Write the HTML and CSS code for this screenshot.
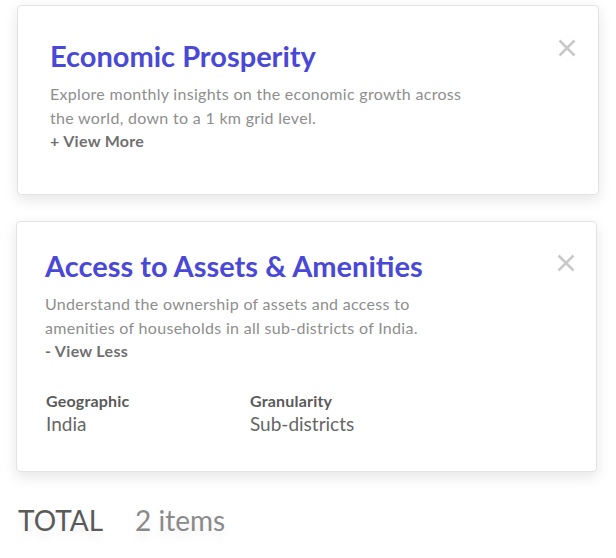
FILE: index.html
```html
<!DOCTYPE html>
<html>
<head>
<meta charset="utf-8">
<link rel="stylesheet" href="styles.css">
</head>
<body>
<div class="page">
  <div class="card card-first">
    <div class="card-head">
      <h2 class="card-title">Economic Prosperity</h2>
      <button class="close close-first" aria-label="close">
        <svg width="18" height="18" viewBox="0 0 18 18"><path d="M1.5 1.5 L16.5 16.5 M16.5 1.5 L1.5 16.5" stroke="#c9c9c9" stroke-width="2.6"/></svg>
      </button>
    </div>
    <p class="card-desc">Explore monthly insights on the economic growth across<br>the world, down to a 1 km grid level.</p>
    <a class="toggle">+ View More</a>
  </div>
  <div class="card card-second">
    <div class="card-head">
      <h2 class="card-title">Access to Assets &amp; Amenities</h2>
      <button class="close" aria-label="close">
        <svg width="18" height="18" viewBox="0 0 18 18"><path d="M1.5 1.5 L16.5 16.5 M16.5 1.5 L1.5 16.5" stroke="#c9c9c9" stroke-width="2.6"/></svg>
      </button>
    </div>
    <p class="card-desc">Understand the ownership of assets and access to<br>amenities of households in all sub-districts of India.</p>
    <a class="toggle">- View Less</a>
    <div class="meta">
      <div class="meta-item">
        <div class="meta-label">Geographic</div>
        <div class="meta-value">India</div>
      </div>
      <div class="meta-item">
        <div class="meta-label">Granularity</div>
        <div class="meta-value">Sub-districts</div>
      </div>
    </div>
  </div>
  <div class="total">
    <span class="total-label">TOTAL</span>
    <span class="total-count">2 items</span>
  </div>
</div>
</body>
</html>
```

FILE: styles.css
```css
* { box-sizing: border-box; }
html, body { margin: 0; padding: 0; background: #ffffff; }
body { font-family: Lato, "Open Sans", sans-serif; }
.page {
  width: 616px;
  height: 558px;
  padding: 5px 0 0 0;
  display: flex;
  flex-direction: column;
}
.card {
  background: #fff;
  border: 1px solid #e3e3e3;
  border-radius: 4px;
  box-shadow: 0 5px 14px rgba(0,0,0,0.10);
}
.card-first {
  margin: 0 17px 0 17px;
  height: 190px;
  padding: 32px 22px 0 32px;
}
.card-second {
  margin: 26px 19px 0 16px;
  height: 251px;
  padding: 26px 21px 0 28px;
}
.card-head {
  display: flex;
  justify-content: space-between;
  align-items: flex-start;
}
.card-title {
  margin: 0;
  font-size: 29px;
  font-weight: 700;
  color: #4a48d6;
  line-height: 36px;
}
.close {
  border: 0;
  background: none;
  padding: 0;
  margin-top: 6px;
  width: 18px;
  height: 18px;
  display: block;
}
.close-first { margin-top: 1px; }
.close svg { display: block; }
.card-desc {
  margin: 8px 0 0 0;
  font-size: 16px;
  letter-spacing: 0.3px;
  line-height: 23.5px;
  color: #8e8e8e;
}
.toggle {
  display: block;
  font-size: 16px;
  letter-spacing: 0.3px;
  font-weight: 700;
  line-height: 23px;
  color: #707070;
}
.meta {
  display: flex;
  margin-top: 28px;
  padding-left: 1px;
}
.meta-item { width: 204px; }
.meta-label {
  font-size: 16px;
  letter-spacing: 0.2px;
  font-weight: 700;
  color: #5a5a5a;
  line-height: 22px;
}
.meta-value {
  font-size: 19px;
  color: #666;
  line-height: 24px;
}
.total {
  margin: 31px 0 0 18px;
  display: flex;
  align-items: baseline;
  gap: 32px;
  font-size: 28px;
  line-height: 34px;
}
.total-label { color: #5a5a5a; text-shadow: 0 6px 8px rgba(0,0,0,0.08); }
.total-count { color: #8a8a8a; text-shadow: 0 6px 8px rgba(0,0,0,0.08); }
```
